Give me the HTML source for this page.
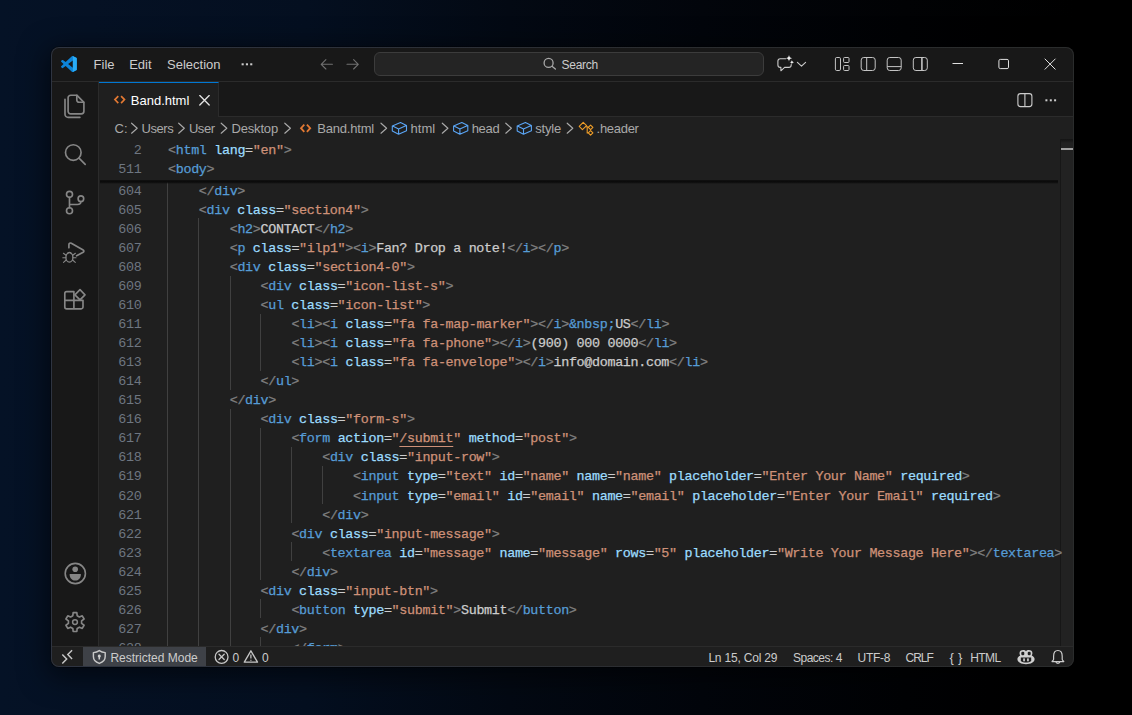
<!DOCTYPE html>
<html lang="en">
<head>
<meta charset="utf-8">
<title>Band.html - Visual Studio Code</title>
<style>
*{box-sizing:border-box;margin:0;padding:0}
html,body{width:1132px;height:715px;overflow:hidden;background:#03060c}
body{position:relative;font-family:"Liberation Sans",sans-serif;color:#ccc;
 background:linear-gradient(90deg,#051226 0%,#051124 8%,#040f20 27%,#030913 45%,#02050b 62%,#010204 80%,#000 95%);
}
#page{position:absolute;left:0;top:0;width:1132px;height:715px}
#win{position:absolute;left:51px;top:47px;width:1023px;height:620px;background:#1f1f1f;border-radius:8px;overflow:hidden;
 box-shadow:0 0 0 1px rgba(0,0,0,.3), 0 6px 28px 4px rgba(0,0,0,.55)}
#winb{position:absolute;left:51px;top:47px;width:1023px;height:620px;border-radius:8px;border:1px solid transparent;pointer-events:none;
 background:linear-gradient(90deg,#2e3441 0%,#2d313a 30%,#2b2d30 60%,#2a2c2c 100%) border-box;
 -webkit-mask:linear-gradient(#000 0 0) padding-box,linear-gradient(#000 0 0);-webkit-mask-composite:xor;mask:linear-gradient(#000 0 0) padding-box exclude,linear-gradient(#000 0 0)}
/* everything inside #lay is positioned in page coordinates */
#lay{position:absolute;left:-51px;top:-47px;width:1132px;height:715px}
#lay>div,#lay>span,#lay>i{position:absolute}
.ui{font-size:13px;white-space:pre;color:#ccc}
#title{left:51px;top:47px;width:1023px;height:35px;background:#181818;border-bottom:1px solid #2b2b2b}
.m{top:48px;height:34px;line-height:34px}
#search{left:374px;top:52px;width:390px;height:24px;border:1px solid #3c3c3c;border-radius:6px;background:#242424}
#act{left:51px;top:82px;width:48px;height:564px;background:#181818;border-right:1px solid #2b2b2b}
#tabs{left:99px;top:82px;width:975px;height:35px;background:#181818;border-bottom:1px solid #2b2b2b}
#tab{left:99px;top:82px;width:120px;height:35px;background:#1f1f1f;border-top:1px solid #0078d4;border-right:1px solid #2b2b2b}
.bc{top:118px;height:22px;line-height:22px;color:#a9a9a9}
#ed{font-family:"Liberation Mono",monospace;font-size:13.4px;letter-spacing:-0.332px;left:0;top:0;width:1132px;height:715px}
#ed>*{position:absolute}
.ln{left:99px;width:42.4px;text-align:right;height:19px;line-height:22px;color:#6e7681;white-space:pre}
.cl{height:19px;line-height:22px;white-space:pre;color:#ccc;-webkit-text-stroke:.25px}
.g{width:1px;background:#404040;display:block}
.p{color:#808080}.t{color:#569cd6}.a{color:#9cdcfe}.s{color:#ce9178}.x{color:#cccccc}
.u{text-decoration:underline;text-underline-offset:4px;text-decoration-thickness:1px}
#sticky{left:99px;top:139px;width:959px;height:41px;background:#1f1f1f}
#stsh{left:100px;top:180px;width:958px;height:5px;background:linear-gradient(#131313 0,#0b0b0b 1px,#0c0c0c 2.2px,rgba(14,14,14,.4) 3.2px,rgba(31,31,31,0) 4.4px)}
#ruler{left:1060px;top:139px;width:14px;height:507px;border-left:1px solid #171717;background:linear-gradient(#141414 0,#1a1a1a 2px,#222 4px,#222 100%)}
#status{left:51px;top:646px;width:1023px;height:21px;background:#1f1f1f;border-top:1px solid #2b2b2b}
#rem{left:51px;top:647px;width:32px;height:20px;background:#1f1f1f}
#rm{left:83px;top:647px;width:123px;height:20px;background:#3e4147}
.st{top:647px;height:21px;line-height:22px;font-size:12px;white-space:pre;color:#ccc}
svg{position:absolute;overflow:visible}
</style>
</head>
<body>
<div id="page">
<div id="win">
<div id="lay">
 <div id="ed">
  <div id="ruler"></div>
  <i style="left:1061px;top:148px;width:13px;height:2px;background:#a0a0a0"></i>
<i class="g" style="left:167px;top:161px;height:514px"></i>
<i class="g" style="left:198px;top:218px;height:457px"></i>
<i class="g" style="left:230px;top:276px;height:114px"></i>
<i class="g" style="left:230px;top:409px;height:266px"></i>
<i class="g" style="left:260px;top:314px;height:57px"></i>
<i class="g" style="left:260px;top:428px;height:152px"></i>
<i class="g" style="left:260px;top:599px;height:19px"></i>
<i class="g" style="left:260px;top:637px;height:38px"></i>
<i class="g" style="left:291px;top:447px;height:76px"></i>
<i class="g" style="left:291px;top:542px;height:19px"></i>
<i class="g" style="left:322px;top:466px;height:38px"></i>
<div class="ln" style="top:180.8px">604</div><div class="cl" style="top:180.8px;left:198.8px"><span class="p">&lt;/</span><span class="t">div</span><span class="p">&gt;</span></div>
<div class="ln" style="top:199.85px">605</div><div class="cl" style="top:199.85px;left:198.8px"><span class="p">&lt;</span><span class="t">div</span> <span class="a">class</span><span class="x">=</span><span class="s">"section4"</span><span class="p">&gt;</span></div>
<div class="ln" style="top:218.89px">606</div><div class="cl" style="top:218.89px;left:229.7px"><span class="p">&lt;</span><span class="t">h2</span><span class="p">&gt;</span><span class="x">CONTACT</span><span class="p">&lt;/</span><span class="t">h2</span><span class="p">&gt;</span></div>
<div class="ln" style="top:237.94px">607</div><div class="cl" style="top:237.94px;left:229.7px"><span class="p">&lt;</span><span class="t">p</span> <span class="a">class</span><span class="x">=</span><span class="s">"ilp1"</span><span class="p">&gt;</span><span class="p">&lt;</span><span class="t">i</span><span class="p">&gt;</span><span class="x">Fan? Drop a note!</span><span class="p">&lt;/</span><span class="t">i</span><span class="p">&gt;</span><span class="p">&lt;/</span><span class="t">p</span><span class="p">&gt;</span></div>
<div class="ln" style="top:256.98px">608</div><div class="cl" style="top:256.98px;left:229.7px"><span class="p">&lt;</span><span class="t">div</span> <span class="a">class</span><span class="x">=</span><span class="s">"section4-0"</span><span class="p">&gt;</span></div>
<div class="ln" style="top:276.03px">609</div><div class="cl" style="top:276.03px;left:260.5px"><span class="p">&lt;</span><span class="t">div</span> <span class="a">class</span><span class="x">=</span><span class="s">"icon-list-s"</span><span class="p">&gt;</span></div>
<div class="ln" style="top:295.07px">610</div><div class="cl" style="top:295.07px;left:260.5px"><span class="p">&lt;</span><span class="t">ul</span> <span class="a">class</span><span class="x">=</span><span class="s">"icon-list"</span><span class="p">&gt;</span></div>
<div class="ln" style="top:314.12px">611</div><div class="cl" style="top:314.12px;left:291.4px"><span class="p">&lt;</span><span class="t">li</span><span class="p">&gt;</span><span class="p">&lt;</span><span class="t">i</span> <span class="a">class</span><span class="x">=</span><span class="s">"fa fa-map-marker"</span><span class="p">&gt;</span><span class="p">&lt;/</span><span class="t">i</span><span class="p">&gt;</span><span class="t">&amp;nbsp;</span><span class="x">US</span><span class="p">&lt;/</span><span class="t">li</span><span class="p">&gt;</span></div>
<div class="ln" style="top:333.16px">612</div><div class="cl" style="top:333.16px;left:291.4px"><span class="p">&lt;</span><span class="t">li</span><span class="p">&gt;</span><span class="p">&lt;</span><span class="t">i</span> <span class="a">class</span><span class="x">=</span><span class="s">"fa fa-phone"</span><span class="p">&gt;</span><span class="p">&lt;/</span><span class="t">i</span><span class="p">&gt;</span><span class="x">(900) 000 0000</span><span class="p">&lt;/</span><span class="t">li</span><span class="p">&gt;</span></div>
<div class="ln" style="top:352.21px">613</div><div class="cl" style="top:352.21px;left:291.4px"><span class="p">&lt;</span><span class="t">li</span><span class="p">&gt;</span><span class="p">&lt;</span><span class="t">i</span> <span class="a">class</span><span class="x">=</span><span class="s">"fa fa-envelope"</span><span class="p">&gt;</span><span class="p">&lt;/</span><span class="t">i</span><span class="p">&gt;</span><span class="x">info@domain.com</span><span class="p">&lt;/</span><span class="t">li</span><span class="p">&gt;</span></div>
<div class="ln" style="top:371.25px">614</div><div class="cl" style="top:371.25px;left:260.5px"><span class="p">&lt;/</span><span class="t">ul</span><span class="p">&gt;</span></div>
<div class="ln" style="top:390.3px">615</div><div class="cl" style="top:390.3px;left:229.7px"><span class="p">&lt;/</span><span class="t">div</span><span class="p">&gt;</span></div>
<div class="ln" style="top:409.34px">616</div><div class="cl" style="top:409.34px;left:260.5px"><span class="p">&lt;</span><span class="t">div</span> <span class="a">class</span><span class="x">=</span><span class="s">"form-s"</span><span class="p">&gt;</span></div>
<div class="ln" style="top:428.39px">617</div><div class="cl" style="top:428.39px;left:291.4px"><span class="p">&lt;</span><span class="t">form</span> <span class="a">action</span><span class="x">=</span><span class="s">"</span><span class="s u">/submit</span><span class="s">"</span> <span class="a">method</span><span class="x">=</span><span class="s">"post"</span><span class="p">&gt;</span></div>
<div class="ln" style="top:447.43px">618</div><div class="cl" style="top:447.43px;left:322.2px"><span class="p">&lt;</span><span class="t">div</span> <span class="a">class</span><span class="x">=</span><span class="s">"input-row"</span><span class="p">&gt;</span></div>
<div class="ln" style="top:466.48px">619</div><div class="cl" style="top:466.48px;left:353.0px"><span class="p">&lt;</span><span class="t">input</span> <span class="a">type</span><span class="x">=</span><span class="s">"text"</span> <span class="a">id</span><span class="x">=</span><span class="s">"name"</span> <span class="a">name</span><span class="x">=</span><span class="s">"name"</span> <span class="a">placeholder</span><span class="x">=</span><span class="s">"Enter Your Name"</span> <span class="a">required</span><span class="p">&gt;</span></div>
<div class="ln" style="top:485.52px">620</div><div class="cl" style="top:485.52px;left:353.0px"><span class="p">&lt;</span><span class="t">input</span> <span class="a">type</span><span class="x">=</span><span class="s">"email"</span> <span class="a">id</span><span class="x">=</span><span class="s">"email"</span> <span class="a">name</span><span class="x">=</span><span class="s">"email"</span> <span class="a">placeholder</span><span class="x">=</span><span class="s">"Enter Your Email"</span> <span class="a">required</span><span class="p">&gt;</span></div>
<div class="ln" style="top:504.57px">621</div><div class="cl" style="top:504.57px;left:322.2px"><span class="p">&lt;/</span><span class="t">div</span><span class="p">&gt;</span></div>
<div class="ln" style="top:523.61px">622</div><div class="cl" style="top:523.61px;left:291.4px"><span class="p">&lt;</span><span class="t">div</span> <span class="a">class</span><span class="x">=</span><span class="s">"input-message"</span><span class="p">&gt;</span></div>
<div class="ln" style="top:542.65px">623</div><div class="cl" style="top:542.65px;left:322.2px"><span class="p">&lt;</span><span class="t">textarea</span> <span class="a">id</span><span class="x">=</span><span class="s">"message"</span> <span class="a">name</span><span class="x">=</span><span class="s">"message"</span> <span class="a">rows</span><span class="x">=</span><span class="s">"5"</span> <span class="a">placeholder</span><span class="x">=</span><span class="s">"Write Your Message Here"</span><span class="p">&gt;</span><span class="p">&lt;/</span><span class="t">textarea</span><span class="p">&gt;</span></div>
<div class="ln" style="top:561.7px">624</div><div class="cl" style="top:561.7px;left:291.4px"><span class="p">&lt;/</span><span class="t">div</span><span class="p">&gt;</span></div>
<div class="ln" style="top:580.75px">625</div><div class="cl" style="top:580.75px;left:260.5px"><span class="p">&lt;</span><span class="t">div</span> <span class="a">class</span><span class="x">=</span><span class="s">"input-btn"</span><span class="p">&gt;</span></div>
<div class="ln" style="top:599.79px">626</div><div class="cl" style="top:599.79px;left:291.4px"><span class="p">&lt;</span><span class="t">button</span> <span class="a">type</span><span class="x">=</span><span class="s">"submit"</span><span class="p">&gt;</span><span class="x">Submit</span><span class="p">&lt;/</span><span class="t">button</span><span class="p">&gt;</span></div>
<div class="ln" style="top:618.84px">627</div><div class="cl" style="top:618.84px;left:260.5px"><span class="p">&lt;/</span><span class="t">div</span><span class="p">&gt;</span></div>
<div class="ln" style="top:637.88px">628</div><div class="cl" style="top:637.88px;left:291.4px"><span class="p">&lt;/</span><span class="t">form</span><span class="p">&gt;</span></div>
  <div id="sticky"></div>
  <div id="stsh"></div>
  <div class="ln" style="top:139.7px">2</div><div class="cl" style="top:139.7px;left:168px"><span class="p">&lt;</span><span class="t">html</span> <span class="a">lang</span><span class="x">=</span><span class="s">"en"</span><span class="p">&gt;</span></div>
  <div class="ln" style="top:158.8px">511</div><div class="cl" style="top:158.8px;left:168px"><span class="p">&lt;</span><span class="t">body</span><span class="p">&gt;</span></div>
 </div>
 <div id="title"></div>
 <span class="ui m" style="left:93.6px">File</span>
 <span class="ui m" style="left:129.2px">Edit</span>
 <span class="ui m" style="left:167px">Selection</span>
 <div id="search"></div>
 <span class="ui" style="left:561.6px;top:53px;line-height:24px;font-size:12px;letter-spacing:-.3px">Search</span>
 <div id="act"></div>
 <div id="tabs"></div>
 <div id="tab"></div>
 <span class="ui" style="left:130.8px;top:84px;line-height:34px;color:#fff">Band.html</span>
 <span class="ui bc" style="left:114.6px">C:</span>
 <span class="ui bc" style="left:141.6px;letter-spacing:-.45px">Users</span>
 <span class="ui bc" style="left:188.9px;letter-spacing:-.45px">User</span>
 <span class="ui bc" style="left:231.4px;letter-spacing:-.15px">Desktop</span>
 <span class="ui bc" style="left:317.3px;letter-spacing:-.2px">Band.html</span>
 <span class="ui bc" style="left:410.6px">html</span>
 <span class="ui bc" style="left:471.7px;letter-spacing:-.3px">head</span>
 <span class="ui bc" style="left:535.3px;letter-spacing:-.2px">style</span>
 <span class="ui bc" style="left:596.6px;letter-spacing:-.3px">.header</span>
 <div id="status"></div>
 <div id="rem"></div>
 <div id="rm"></div>
 <span class="st" style="left:110.4px">Restricted Mode</span>
 <span class="st" style="left:232.6px">0</span>
 <span class="st" style="left:261.9px">0</span>
 <span class="st" style="left:708.4px;letter-spacing:-.2px">Ln 15, Col 29</span>
 <span class="st" style="left:793px;letter-spacing:-.5px">Spaces: 4</span>
 <span class="st" style="left:857.6px;letter-spacing:-.3px">UTF-8</span>
 <span class="st" style="left:905.5px;letter-spacing:-1px">CRLF</span>
 <span class="st" style="left:949.4px;font-size:13px;letter-spacing:.3px;line-height:21px">{ }</span>
 <span class="st" style="left:970.3px;letter-spacing:-.6px">HTML</span>
</div>
</div>
<div id="winb"></div>
<svg id="ico" width="1132" height="715" viewBox="0 0 1132 715" style="left:0;top:0">
<g transform="translate(61 56) scale(0.158 0.161)"><path fill="#0d84d8" fill-rule="evenodd" d="M70.9119 99.3171C72.4869 99.9307 74.2828 99.8914 75.8725 99.1264L96.4608 89.2197C98.6242 88.1787 100 85.9892 100 83.5872V16.4133C100 14.0113 98.6243 11.8218 96.4609 10.7808L75.8725 0.873756C73.7862 -0.130129 71.3446 0.11576 69.5135 1.44695C69.252 1.63711 69.0028 1.84943 68.769 2.08341L29.3551 38.0415L12.1872 25.0096C10.589 23.7965 8.35363 23.8959 6.86933 25.2461L1.36303 30.2549C-0.452552 31.9064 -0.454633 34.7627 1.35853 36.417L16.2471 50.0001L1.35853 63.5832C-0.454633 65.2374 -0.452552 68.0938 1.36303 69.7453L6.86933 74.7541C8.35363 76.1043 10.589 76.2037 12.1872 74.9905L29.3551 61.9587L68.769 97.9167C69.3925 98.5406 70.1246 99.0104 70.9119 99.3171ZM75.0152 27.2989L45.1091 50.0001L75.0152 72.7012V27.2989Z"/><path fill="#29acf7" d="M75 0.5 L96.5 10.8 C98.6 11.8 100 14 100 16.4 V83.6 C100 86 98.6 88.2 96.5 89.2 L75 99.5 Z"/></g>
<g fill="#cccccc"><rect x="241.6" y="63.3" width="2.1" height="2"/><rect x="245.9" y="63.3" width="2.1" height="2"/><rect x="250.2" y="63.3" width="2.1" height="2"/></g>
<g fill="none" stroke="#707070" stroke-width="1.1" stroke-linecap="round" stroke-linejoin="round"><path d="M332.4 64.3H321.3M325.9 59.6L321.2 64.3L325.9 69"/><path d="M347 64.3H358.2M353.6 59.6L358.3 64.3L353.6 69"/></g>
<g fill="none" stroke="#a8a8a8" stroke-width="1.3" stroke-linecap="round"><circle cx="548.6" cy="62.9" r="4.5"/><path d="M552 66.3L555.4 69.1"/></g>
<g fill="none" stroke="#cccccc" stroke-width="1.1" stroke-linecap="round" stroke-linejoin="round"><path d="M785.6 58.7H780.3a2.4 2.4 0 0 0 -2.4 2.4V65a2.4 2.4 0 0 0 2.4 2.4H780.9V70.8L784.6 67.4H788.8a2.4 2.4 0 0 0 2.4 -2.4V64.6"/><path d="M797.4 62.3L801.5 66.2L805.6 62.3"/></g>
<g fill="#f2f2f2"><path d="M789 55C789.4 57.2 790 57.8 792.3 58.2C790 58.6 789.4 59.2 789 61.4C788.6 59.2 788 58.6 785.7 58.2C788 57.8 788.6 57.2 789 55Z"/><path d="M791.9 60C792.2 61.5 792.6 61.9 794.2 62.2C792.6 62.5 792.2 62.9 791.9 64.4C791.6 62.9 791.2 62.5 789.6 62.2C791.2 61.9 791.6 61.5 791.9 60Z"/></g>
<g fill="none" stroke="#c4c4c4" stroke-width="1"><rect x="835.4" y="57.5" width="5.1" height="13" rx="1.3"/><rect x="843.6" y="57.5" width="5.4" height="5" rx="0.9"/><rect x="843.6" y="65.5" width="5.4" height="5" rx="0.9"/><rect x="861.2" y="57.5" width="14" height="13" rx="2.6"/><path d="M866.7 57.5V70.5"/><rect x="887.2" y="57.5" width="14" height="13" rx="2.6"/><path d="M887.2 66.6H901.2"/><rect x="913.3" y="57.5" width="14" height="13" rx="2.6"/><path d="M921.9 57.5V70.5" stroke-width="1.6"/></g>
<g fill="none" stroke="#e0e0e0" stroke-width="1"><path d="M952.5 63.5H963"/><rect x="998.9" y="59.4" width="9.6" height="9.2" rx="1.4"/><path d="M1045 59L1055.2 69.2M1055.2 59L1045 69.2" stroke-linecap="round"/></g>
<g fill="none" stroke="#868686" stroke-width="1.65" stroke-linecap="round" stroke-linejoin="round"><path d="M70.7 95.2H76.8L83.9 102.3V111.3a2.6 2.6 0 0 1 -2.6 2.6H70.7a2.6 2.6 0 0 1 -2.6 -2.6V97.8a2.6 2.6 0 0 1 2.6 -2.6Z"/><path d="M76.8 95.4V100a2.2 2.2 0 0 0 2.2 2.2H83.7"/><path d="M65 99.3V114.3a3.1 3.1 0 0 0 3.1 3.1H79.9"/><circle cx="73.3" cy="152.5" r="7.8"/><path d="M79 158.2L85.2 164.4"/><circle cx="69.5" cy="194.3" r="3"/><circle cx="69.5" cy="210.7" r="3"/><circle cx="80.9" cy="198.7" r="2.8"/><path d="M69.5 197.3V207.7M80.9 201.5C80.9 203.6 79.4 204.5 77.4 204.5H69.5"/><path d="M68.9 247.8V244.6a1.6 1.6 0 0 1 2.4 -1.4L83.2 250a1.3 1.3 0 0 1 0 2.3L76.6 255.8"/><ellipse cx="69.4" cy="257.4" rx="3.5" ry="4.7" stroke-width="1.3"/><path stroke-width="1.1" d="M66.1 255.2L63.4 253.3M65.9 257.8H62.8M66.2 260L63.5 262.3M72.7 255.2L75.4 253.3M72.9 257.8H76M72.6 260L75.3 262.3M67.6 253.4C67.8 251.9 71 251.9 71.2 253.4"/><path d="M73.9 291.6H66.6a1.8 1.8 0 0 0 -1.8 1.8V307a1.8 1.8 0 0 0 1.8 1.8H81.2a1.8 1.8 0 0 0 1.8 -1.8V300.3H64.8M73.9 291.6V308.8"/><path d="M80 289.7L85 294.8L80 299.9L74.9 294.8Z" /></g>
<circle cx="75.3" cy="573.5" r="10.1" fill="none" stroke="#868686" stroke-width="1.6"/><circle cx="75.2" cy="569.3" r="2.8" fill="#868686"/><path d="M69.6 573.9H80.9C80.9 578 78.6 580.5 75.25 580.5C71.9 580.5 69.6 578 69.6 573.9Z" fill="#868686"/>
<path d="M77.18 615.77 L76.83 612.68 L73.17 612.68 L72.82 615.77 L70.60 617.04 L67.75 615.80 L65.92 618.97 L68.42 620.82 L68.42 623.38 L65.92 625.23 L67.75 628.40 L70.60 627.16 L72.82 628.43 L73.17 631.52 L76.83 631.52 L77.18 628.43 L79.40 627.16 L82.25 628.40 L84.08 625.23 L81.58 623.38 L81.58 620.82 L84.08 618.97 L82.25 615.80 L79.40 617.04Z" fill="none" stroke="#868686" stroke-width="1.65" stroke-linejoin="round"/><circle cx="75" cy="622.1" r="2.4" fill="none" stroke="#868686" stroke-width="1.5"/>
<g fill="none" stroke="#e37933" stroke-width="1.65" stroke-linejoin="miter"><path d="M118.3 96.1L114.9 99.6L118.3 103.1"/><path d="M121.1 96.1L124.5 99.6L121.1 103.1"/></g>
<path d="M199.8 95.6L209.2 105M209.2 95.6L199.8 105" stroke="#e4e4e4" stroke-width="1.35" fill="none" stroke-linecap="round"/>
<g fill="none" stroke="#cccccc" stroke-width="1.1"><rect x="1017.9" y="93.6" width="14" height="13" rx="2.6"/><path d="M1024.9 93.6V106.6"/></g>
<g fill="#cccccc"><rect x="1045.4" y="99.3" width="2" height="2"/><rect x="1049.8" y="99.3" width="2" height="2"/><rect x="1054.1" y="99.3" width="2" height="2"/></g>
<path d="M131.6 123.2L137.2 128.2L131.6 133.2M178.7 123.2L184.29999999999998 128.2L178.7 133.2M221.2 123.2L226.79999999999998 128.2L221.2 133.2M284.8 123.2L290.40000000000003 128.2L284.8 133.2M381 123.2L386.6 128.2L381 133.2M442.3 123.2L447.90000000000003 128.2L442.3 133.2M505.8 123.2L511.40000000000003 128.2L505.8 133.2M567.2 123.2L572.8000000000001 128.2L567.2 133.2" fill="none" stroke="#a9a9a9" stroke-width="1.15" stroke-linecap="round" stroke-linejoin="round"/>
<g fill="none" stroke="#e37933" stroke-width="1.8"><path d="M304.3 124.6L301 128.2L304.3 131.8"/><path d="M306.9 124.6L310.2 128.2L306.9 131.8"/></g>
<path d="M400.5 122.6L406.5 125.4V130.8L398.6 134.2L392.3 131V125.9ZM392.6 126.1L398.6 128.9L406.3 125.6M398.6 128.9V134M461.8 122.6L467.8 125.4V130.8L459.90000000000003 134.2L453.6 131V125.9ZM453.90000000000003 126.1L459.90000000000003 128.9L467.6 125.6M459.90000000000003 128.9V134M525.4000000000001 122.6L531.4000000000001 125.4V130.8L523.5 134.2L517.2 131V125.9ZM517.5 126.1L523.5 128.9L531.2 125.6M523.5 128.9V134" fill="none" stroke="#5aa5f5" stroke-width="1.1" stroke-linejoin="round"/>
<g fill="none" stroke="#ee9d28" stroke-width="1.1" stroke-linejoin="round"><path d="M583.2 122.4L586.6 125.6L582.4 129.6L579.2 126.4Z"/><path d="M590.6 125.1L592.9 127.4L590.6 129.7L588.3 127.4Z"/><path d="M590.6 130.6L592.9 132.9L590.6 135.2L588.3 132.9Z"/><path d="M585.6 126.8H588.3M587.2 126.8V132.9H588.3"/></g>
<g fill="none" stroke="#c8c8c8" stroke-width="1.45" stroke-linejoin="miter"><path d="M62.3 654.6L66.7 659L62.3 663.4"/><path d="M72.1 650.3L67.8 654.6L72.1 658.9"/></g>
<path d="M99.3 650.6C97.5 651.9 95.6 652.5 93.4 652.6V656.6C93.4 660 95.8 662.3 99.3 663.4C102.8 662.3 105.2 660 105.2 656.6V652.6C103 652.5 101.1 651.9 99.3 650.6Z" fill="none" stroke="#c8c8c8" stroke-width="1.45" stroke-linejoin="round"/><path d="M99.3 654.6a1.5 1.5 0 0 1 0.75 2.8V659.6H98.55V657.4a1.5 1.5 0 0 1 0.75 -2.8Z" fill="#d0d0d0"/>
<g fill="none" stroke="#c6c6c6" stroke-width="1.3" stroke-linecap="round"><circle cx="221.6" cy="656.9" r="6.4"/><path d="M219 654.3L224.2 659.5M224.2 654.3L219 659.5"/></g>
<path d="M250.9 650.8L257.5 662.2H244.3Z" fill="none" stroke="#c6c6c6" stroke-width="1.3" stroke-linejoin="round"/><path d="M250.9 654.4V658.4M250.9 659.8V660.8" stroke="#cccccc" stroke-width="1.2" fill="none"/>
<g><path d="M1020.2 655.6C1018.8 653 1019.6 650 1023.2 650C1024.8 650 1025.6 650.6 1026 651.4C1026.4 650.6 1027.2 650 1028.8 650C1032.4 650 1033.2 653 1031.800 655.6C1033.6 656.5 1034.6 657.8 1034.6 659.3C1034.6 662.3 1030.8 664.2 1026 664.2C1021.2 664.2 1017.4 662.3 1017.4 659.3C1017.4 657.8 1018.4 656.500 1020.2 655.6Z" fill="#cfcfcf"/><rect x="1021.3" y="651.7" width="3" height="3.5" rx="1.3" fill="#1f1f1f"/><rect x="1027.7" y="651.7" width="3" height="3.5" rx="1.3" fill="#1f1f1f"/><path d="M1020.8 657.6H1031.2V661C1029.8 662 1028 662.5 1026 662.5C1024 662.5 1022.2 662 1020.8 661Z" fill="#1f1f1f"/><rect x="1023.2" y="658.4" width="1.7" height="2.9" fill="#cfcfcf"/><rect x="1027.1" y="658.4" width="1.7" height="2.9" fill="#cfcfcf"/></g>
<path d="M1053.6 659.4V656.3C1053.6 652.9 1055.300 650.5 1057.9 650.5C1060.500 650.5 1062.2 652.9 1062.2 656.3V659.4C1062.500 660.2 1063.2 660.9 1063.8 661.6H1052C1052.6 660.9 1053.3 660.2 1053.6 659.4ZM1055.9 662C1056.100 663.700 1059.7 663.700 1059.900 662" fill="none" stroke="#cccccc" stroke-width="1.2" stroke-linejoin="round"/>
</svg>
</div>
</body>
</html>
